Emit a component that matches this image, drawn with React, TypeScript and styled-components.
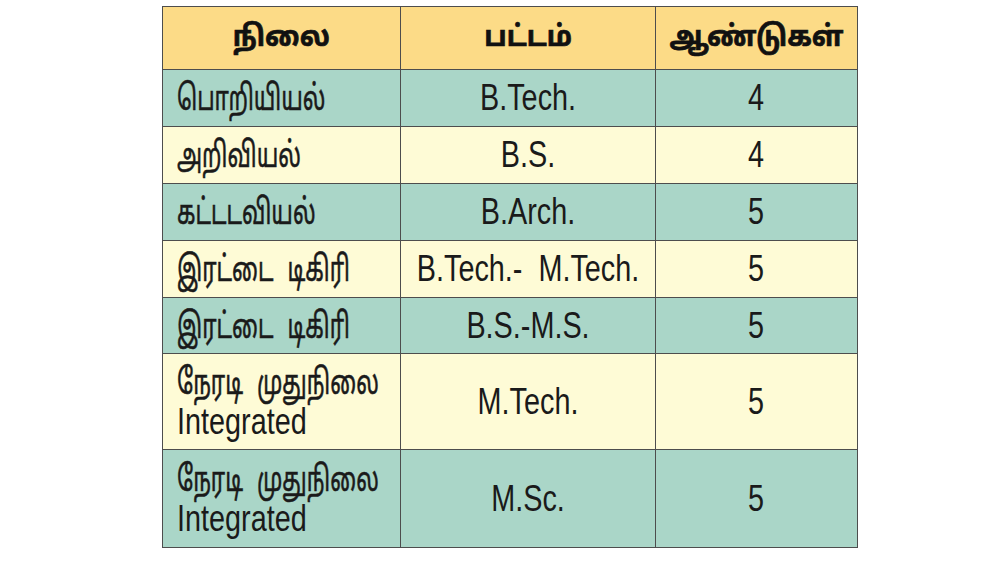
import React from 'react'
import styled, { createGlobalStyle } from 'styled-components'

const Global = createGlobalStyle`
  html, body {
    margin: 0;
    padding: 0;
    background: #ffffff;
  }
`

const Page = styled.div`
  width: 1000px;
  height: 562px;
  padding: 6px 0 0 162px;
  box-sizing: border-box;
`

const Table = styled.table`
  border-collapse: collapse;
  table-layout: fixed;
  width: 692px;
  height: 542px;
  font-family: "Liberation Sans", "Noto Sans Tamil", "Noto Sans", sans-serif;
  color: #1a1a1a;
  border: 1px solid #4d4d4d;
`

const Head = styled.th<{ $w: number }>`
  width: ${p => p.$w}px;
  height: 62px;
  background: #fcdb87;
  border: 1px solid #4d4d4d;
  padding: 0;
  white-space: nowrap;
`

const HeadText = styled.span`
  display: inline-block;
  font-size: 29px;
  font-weight: 700;
  color: #111;
  -webkit-text-stroke: 0.7px #111;
  transform: scaleX(0.93);
`

const Row = styled.tr<{ $tone: 'teal' | 'cream'; $h: number }>`
  height: ${p => p.$h}px;
  background: ${p => (p.$tone === 'teal' ? '#aad6c8' : '#fefbd6')};
`

const Cell = styled.td<{ $left?: boolean }>`
  border: 1px solid #4d4d4d;
  padding: ${p => (p.$left ? '0 0 0 14px' : '0')};
  white-space: nowrap;
`

const Center = styled.div`
  display: flex;
  justify-content: center;
  align-items: center;
`

const Line = styled.div`
  height: 40px;
  line-height: 40px;
`

// the printed fonts are condensed, so the glyphs are narrowed
const Tamil = styled.span`
  display: inline-block;
  font-size: 35px;
  word-spacing: 12px;
  -webkit-text-stroke: 0.6px #1a1a1a;
  transform: scaleX(0.64);
  transform-origin: left center;
`

const Latin = styled.span<{ $origin?: string }>`
  display: inline-block;
  flex-shrink: 0;
  font-size: 36px;
  transform: scaleX(0.8);
  transform-origin: ${p => p.$origin ?? 'center'} center;
  white-space: pre;
`

const rows = [
  { level: ['பொறியியல்'], degree: 'B.Tech.', years: '4', h: 57 },
  { level: ['அறிவியல்'], degree: 'B.S.', years: '4', h: 57 },
  { level: ['கட்டடவியல்'], degree: 'B.Arch.', years: '5', h: 57 },
  { level: ['இரட்டை டிகிரி'], degree: 'B.Tech.-  M.Tech.', years: '5', h: 57 },
  { level: ['இரட்டை டிகிரி'], degree: 'B.S.-M.S.', years: '5', h: 56 },
  { level: ['நேரடி முதுநிலை', 'Integrated'], degree: 'M.Tech.', years: '5', h: 96 },
  { level: ['நேரடி முதுநிலை', 'Integrated'], degree: 'M.Sc.', years: '5', h: 98 },
]

export default function App() {
  return (
    <Page>
      <Global />
      <Table>
        <thead>
          <tr>
            <Head $w={237}>
              <HeadText>நிலை</HeadText>
            </Head>
            <Head $w={254}>
              <HeadText>பட்டம்</HeadText>
            </Head>
            <Head $w={201}>
              <HeadText>ஆண்டுகள்</HeadText>
            </Head>
          </tr>
        </thead>
        <tbody>
          {rows.map((r, i) => (
            <Row key={i} $tone={i % 2 === 0 ? 'teal' : 'cream'} $h={r.h}>
              <Cell $left>
                {r.level.map((l, j) => (
                  <Line key={j}>
                    {/[a-z]/i.test(l) ? <Latin $origin="left">{l}</Latin> : <Tamil>{l}</Tamil>}
                  </Line>
                ))}
              </Cell>
              <Cell>
                <Center>
                  <Latin>{r.degree}</Latin>
                </Center>
              </Cell>
              <Cell>
                <Center>
                  <Latin>{r.years}</Latin>
                </Center>
              </Cell>
            </Row>
          ))}
        </tbody>
      </Table>
    </Page>
  )
}
